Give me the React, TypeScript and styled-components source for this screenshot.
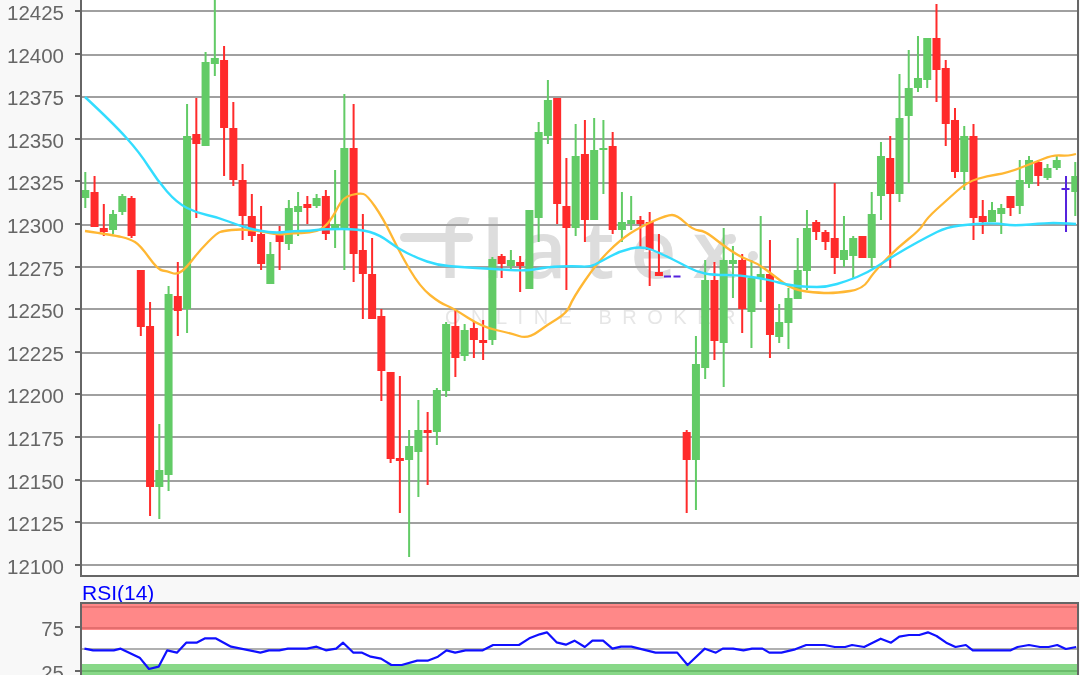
import React from 'react'
import styled, { createGlobalStyle } from 'styled-components'

const GlobalStyle = createGlobalStyle`
  html, body {
    margin: 0;
    padding: 0;
    background: #f8f8f8;
  }
`

const Page = styled.div`
  width: 1080px;
  height: 675px;
  overflow: hidden;
  display: flex;
  flex-direction: column;
  background: #f8f8f8;
  font-family: "Liberation Sans", Arial, sans-serif;
  filter: blur(0.5px);
`

const PriceRow = styled.div`
  display: flex;
  height: 577px;
  flex: none;
`

const Axis = styled.div`
  width: 80px;
  flex: none;
  display: flex;
  flex-direction: column;
`

const PriceAxis = styled(Axis)`
  margin-top: -10.3px;
`

const AxisLabel = styled.div<{ $h: number }>`
  height: ${({ $h }) => $h}px;
  flex: none;
  display: flex;
  align-items: center;
  justify-content: flex-end;
  gap: 11px;
  font-size: 20.5px;
  color: #666;

  &::after {
    content: '';
    width: 5px;
    height: 2px;
    background: #666;
  }
`

const AxisValue = styled.span`
  padding-top: 4px;
`

const Plot = styled.div`
  position: relative;
  width: 995px;
  height: 575px;
  flex: none;
  background: #fff;
  border: solid 2px #666;
  border-top: none;
  overflow: hidden;
`

const Watermark = styled.div`
  position: absolute;
  left: 318px;
  top: 201px;
  width: 400px;
  display: flex;
  flex-direction: column;
  color: #ddd;
  pointer-events: none;
`

const Logo = styled.div`
  position: relative;
  height: 92px;
  padding-left: 37px;
  font-family: "Open Sans", sans-serif;
  font-weight: 600;
  font-size: 80px;
  line-height: 92px;
  letter-spacing: 16px;

  &::before {
    content: '';
    position: absolute;
    left: 0;
    top: 32px;
    width: 73px;
    height: 9px;
    border-radius: 5px;
    background: #ddd;
  }

  &::after {
    content: '';
    position: absolute;
    left: 326px;
    top: 33px;
    width: 10px;
    height: 10px;
    border-radius: 50%;
    background: #ddd;
    box-shadow: 22px 17px 0 #ddd;
  }
`

const Tagline = styled.div`
  margin-top: 13px;
  padding-left: 45px;
  font-size: 20px;
  line-height: 22px;
  letter-spacing: 10.5px;
  color: #e6e6e6;
  white-space: nowrap;
`

const ChartSvg = styled.svg`
  position: relative;
  display: block;
`

const RsiTitle = styled.div`
  height: 25px;
  flex: none;
  padding-left: 82px;
  font-size: 21px;
  line-height: 31px;
  color: #0000ff;
`

const RsiRow = styled.div`
  display: flex;
  flex: 1;
  min-height: 0;
`

const RsiAxis = styled(Axis)`
  padding-top: 3px;
`

const RsiPlot = styled.div`
  width: 995px;
  flex: none;
  background: #fff;
  border: solid 2px #666;
  border-bottom: none;
  overflow: hidden;
`

const GREEN = '#62cb66'
const RED = '#ff2b2b'
const PURPLE = '#5522dd'
const CYAN = '#33ddff'
const ORANGE = '#ffb733'

const prices = [12425, 12400, 12375, 12350, 12325, 12300, 12275, 12250, 12225, 12200, 12175, 12150, 12125, 12100]
const gridY = [11, 55, 97, 139, 183, 225, 267, 309, 353, 395, 437, 481, 523, 565]

// g = up, r = down: wick top, body top, body bottom, wick bottom (pixels)
type Candle = ['g' | 'r', number, number, number, number] | null

const candles: Candle[] = [
  ['g', 172, 190, 198, 208], ['r', 176, 192, 227, 227], ['r', 204, 228, 232, 236], ['g', 210, 214, 230, 234],
  ['g', 194, 196, 212, 215], ['r', 196, 198, 236, 238], ['r', 270, 270, 327, 336], ['r', 302, 326, 487, 516],
  ['g', 424, 470, 487, 519], ['g', 286, 294, 475, 491], ['r', 262, 296, 311, 336], ['g', 104, 136, 309, 333],
  ['r', 98, 134, 144, 218], ['g', 52, 62, 146, 146], ['g', 0, 58, 64, 76], ['r', 46, 60, 128, 176],
  ['r', 102, 128, 180, 186], ['r', 164, 180, 216, 240], ['r', 194, 216, 236, 242], ['r', 206, 234, 264, 270],
  ['g', 242, 254, 284, 284], ['r', 226, 234, 242, 270], ['g', 200, 208, 244, 250], ['g', 192, 206, 212, 236],
  ['r', 196, 204, 208, 224], ['g', 194, 198, 206, 208], ['r', 190, 196, 234, 240], ['g', 170, 224, 228, 248],
  ['g', 94, 148, 228, 270], ['r', 104, 148, 254, 282], ['r', 214, 250, 274, 319], ['r', 238, 274, 319, 319],
  ['r', 309, 316, 371, 401], ['r', 372, 372, 459, 463], ['r', 376, 458, 461, 513], ['g', 430, 446, 460, 557],
  ['g', 400, 430, 452, 497], ['r', 412, 430, 433, 485], ['g', 388, 390, 432, 445], ['g', 322, 324, 391, 397],
  ['r', 309, 326, 358, 377], ['g', 324, 330, 356, 361], ['r', 321, 328, 340, 358], ['r', 320, 340, 343, 360],
  ['g', 257, 259, 340, 345], ['r', 254, 256, 264, 278], ['g', 250, 260, 266, 270], ['r', 256, 262, 266, 292],
  ['g', 210, 210, 289, 289], ['g', 122, 132, 218, 242], ['g', 80, 100, 136, 144], ['r', 98, 98, 204, 224],
  ['r', 158, 206, 228, 290], ['g', 124, 156, 228, 236], ['r', 120, 154, 220, 242], ['g', 118, 150, 220, 220],
  ['g', 120, 148, 150, 194], ['r', 132, 146, 230, 234], ['g', 192, 222, 230, 242], ['g', 196, 220, 224, 230],
  ['r', 216, 220, 224, 248], ['r', 212, 222, 250, 286], ['r', 234, 272, 276, 276], null,
  null, ['r', 430, 432, 460, 513], ['g', 336, 364, 460, 510], ['g', 260, 280, 368, 379],
  ['r', 262, 280, 341, 360], ['g', 228, 260, 343, 387], ['g', 246, 260, 264, 298], ['r', 254, 260, 309, 333],
  ['g', 260, 278, 312, 348], ['g', 216, 274, 278, 302], ['r', 240, 274, 335, 358], ['g', 304, 322, 337, 343],
  ['g', 288, 298, 323, 349], ['g', 238, 270, 299, 299], ['g', 210, 228, 271, 290], ['r', 220, 222, 232, 240],
  ['r', 230, 232, 242, 250], ['r', 183, 238, 258, 274], ['g', 216, 250, 260, 267], ['g', 236, 238, 256, 278],
  ['r', 236, 236, 258, 258], ['g', 192, 214, 258, 268], ['g', 142, 156, 196, 220], ['r', 136, 158, 194, 268],
  ['g', 74, 118, 194, 202], ['g', 50, 88, 116, 183], ['g', 36, 78, 88, 92], ['g', 38, 38, 80, 88],
  ['r', 4, 38, 70, 102], ['r', 60, 68, 124, 146], ['r', 108, 120, 172, 178], ['g', 126, 136, 172, 190],
  ['r', 124, 136, 218, 240], ['r', 200, 216, 222, 234], ['g', 202, 210, 222, 222], ['g', 204, 208, 214, 234],
  ['r', 196, 196, 208, 216], ['g', 160, 180, 206, 214], ['g', 156, 160, 184, 188], ['r', 160, 162, 176, 186],
  ['g', 164, 168, 178, 180], ['g', 156, 160, 168, 170], null, ['g', 162, 176, 192, 216],
]

const candleX = (i: number) => 85.3 + 9.252 * i

const pts = (list: number[][]) => list.map(([x, y]) => `${x},${y}`).join(' ')

// rounds the corners of a traced line
const smooth = (list: number[][]) => {
  let d = `M${list[0][0]} ${list[0][1]}`
  for (let i = 1; i < list.length - 1; i++) {
    const [x, y] = list[i]
    const [nx, ny] = list[i + 1]
    d += ` Q${x} ${y} ${(x + nx) / 2} ${(y + ny) / 2}`
  }
  const last = list[list.length - 1]
  return `${d} L${last[0]} ${last[1]}`
}

const cyanLine = [
  [85, 97], [113, 123], [140, 153], [157, 180], [177, 203], [197, 213], [217, 217], [240, 226], [260, 231], [277, 233],
  [293, 231], [310, 231], [323, 229], [360, 229], [380, 235], [397, 248], [417, 258], [437, 265], [460, 267], [493, 269],
  [527, 271], [547, 267], [573, 266], [590, 267], [600, 262], [620, 251], [642, 246], [660, 253], [680, 263], [697, 272],
  [713, 275], [740, 275], [770, 280], [787, 285], [807, 287], [827, 287], [847, 281], [867, 273], [887, 260], [907, 248],
  [927, 237], [947, 227], [973, 224], [997, 223], [1013, 226], [1047, 223], [1060, 223], [1076, 224],
]

const orangeLine = [
  [85, 231], [113, 235], [130, 239], [140, 245], [158, 270], [167, 271], [177, 275], [187, 267], [200, 250], [217, 233],
  [223, 231], [240, 229], [260, 231], [277, 235], [293, 233], [310, 233], [323, 229], [333, 217], [343, 197], [360, 193],
  [367, 195], [383, 218], [400, 253], [420, 287], [440, 303], [453, 308], [482, 327], [510, 333], [528, 339], [547, 325],
  [567, 313], [573, 298], [597, 263], [620, 240], [640, 227], [667, 215], [677, 215], [693, 230], [705, 231],
  [720, 243], [740, 257], [757, 263], [773, 275], [793, 290], [820, 293], [837, 293], [863, 289], [873, 273], [897, 248],
  [920, 230], [927, 218], [947, 200], [967, 182], [987, 176], [1007, 173], [1033, 163], [1053, 155], [1067, 156], [1076, 154],
]

// RSI traced from two crops, converted to page pixels
const rsiCrop = (left: number, list: number[][]) => list.map(([x, y]) => [left + x / 2.9, 570 + y / 3])

const rsiLine = [
  ...rsiCrop(0, [
    [245, 236], [270, 241], [330, 241], [350, 236], [405, 263], [432, 297], [460, 290], [485, 241], [513, 248], [540, 218],
    [570, 218], [595, 205], [625, 205], [670, 230], [755, 248], [780, 241], [810, 241], [835, 236], [890, 236], [918, 230],
    [945, 241], [975, 236], [995, 218], [1025, 248], [1050, 248], [1075, 260], [1105, 266], [1135, 285], [1165, 285],
    [1210, 272], [1240, 272], [1270, 260], [1295, 241], [1320, 248], [1350, 241], [1400, 241], [1430, 225], [1505, 225],
    [1535, 205], [1565, 193],
  ]),
  ...rsiCrop(540, [
    [20, 187], [48, 217], [75, 224], [100, 212], [130, 231], [152, 212], [183, 212], [210, 236], [235, 230], [265, 230],
    [335, 248], [398, 248], [428, 285], [478, 236], [510, 248], [530, 236], [560, 236], [590, 241], [615, 236], [645, 236],
    [665, 248], [700, 248], [740, 238], [772, 225], [825, 225], [855, 231], [885, 231], [905, 225], [940, 231], [988, 206],
    [1018, 218], [1042, 200], [1070, 195], [1100, 195], [1125, 187], [1150, 198], [1178, 218], [1205, 231], [1235, 225],
    [1255, 241], [1365, 241], [1385, 231], [1418, 225], [1450, 231], [1475, 231], [1500, 225], [1525, 237], [1555, 231],
  ]),
]

export default function App() {
  return (
    <Page>
      <GlobalStyle />
      <PriceRow>
        <PriceAxis>
          {prices.map((p) => (
            <AxisLabel key={p} $h={42.6}>
              <AxisValue>{p}</AxisValue>
            </AxisLabel>
          ))}
        </PriceAxis>
        <Plot>
          <Watermark>
            <Logo>flatex</Logo>
            <Tagline>ONLINE BROKER</Tagline>
          </Watermark>
          <ChartSvg width={995} height={575} viewBox="82 0 995 575">
            {gridY.map((y) => (
              <line key={y} x1={82} x2={1077} y1={y} y2={y} stroke="#a0a0a0" strokeWidth={2} />
            ))}
            {candles.map((c, i) => {
              if (!c) return null
              const [dir, wickTop, top, bottom, wickBottom] = c
              const x = candleX(i)
              const fill = dir === 'g' ? GREEN : RED
              return (
                <g key={i} fill={fill}>
                  <rect x={x - 1} y={wickTop} width={2} height={wickBottom - wickTop} />
                  <rect x={x - 4} y={top} width={8} height={bottom - top} />
                </g>
              )
            })}
            <line x1={664} x2={682} y1={276.5} y2={276.5} stroke={PURPLE} strokeWidth={2} strokeDasharray="7 2.5" />
            <rect x={candleX(106) - 1} y={176} width={2} height={56} fill={PURPLE} />
            <rect x={candleX(106) - 4.5} y={188} width={8} height={2} fill={PURPLE} />
            <path d={smooth(orangeLine)} fill="none" stroke={ORANGE} strokeWidth={2.3} />
            <path d={smooth(cyanLine)} fill="none" stroke={CYAN} strokeWidth={2.4} />
          </ChartSvg>
        </Plot>
      </PriceRow>
      <RsiTitle>RSI(14)</RsiTitle>
      <RsiRow>
        <RsiAxis>
          <AxisLabel $h={44}>
            <AxisValue>75</AxisValue>
          </AxisLabel>
          <AxisLabel $h={44}>
            <AxisValue>25</AxisValue>
          </AxisLabel>
        </RsiAxis>
        <RsiPlot>
          <ChartSvg width={995} height={71} viewBox="82 604 995 71">
            <rect x={82} y={604} width={995} height={26} fill="#ff8888" />
            <rect x={82} y={606} width={995} height={2} fill="#e46e6e" />
            <rect x={82} y={627} width={995} height={2} fill="#e46e6e" />
            <rect x={82} y={664} width={995} height={11} fill="#88d888" />
            <rect x={82} y={670} width={995} height={2} fill="#6cbc6c" />
            <rect x={82} y={648} width={995} height={2} fill="#b0b0b0" />
            <polyline points={pts(rsiLine)} fill="none" stroke="#1010ff" strokeWidth={2.2} strokeLinejoin="round" />
          </ChartSvg>
        </RsiPlot>
      </RsiRow>
    </Page>
  )
}
